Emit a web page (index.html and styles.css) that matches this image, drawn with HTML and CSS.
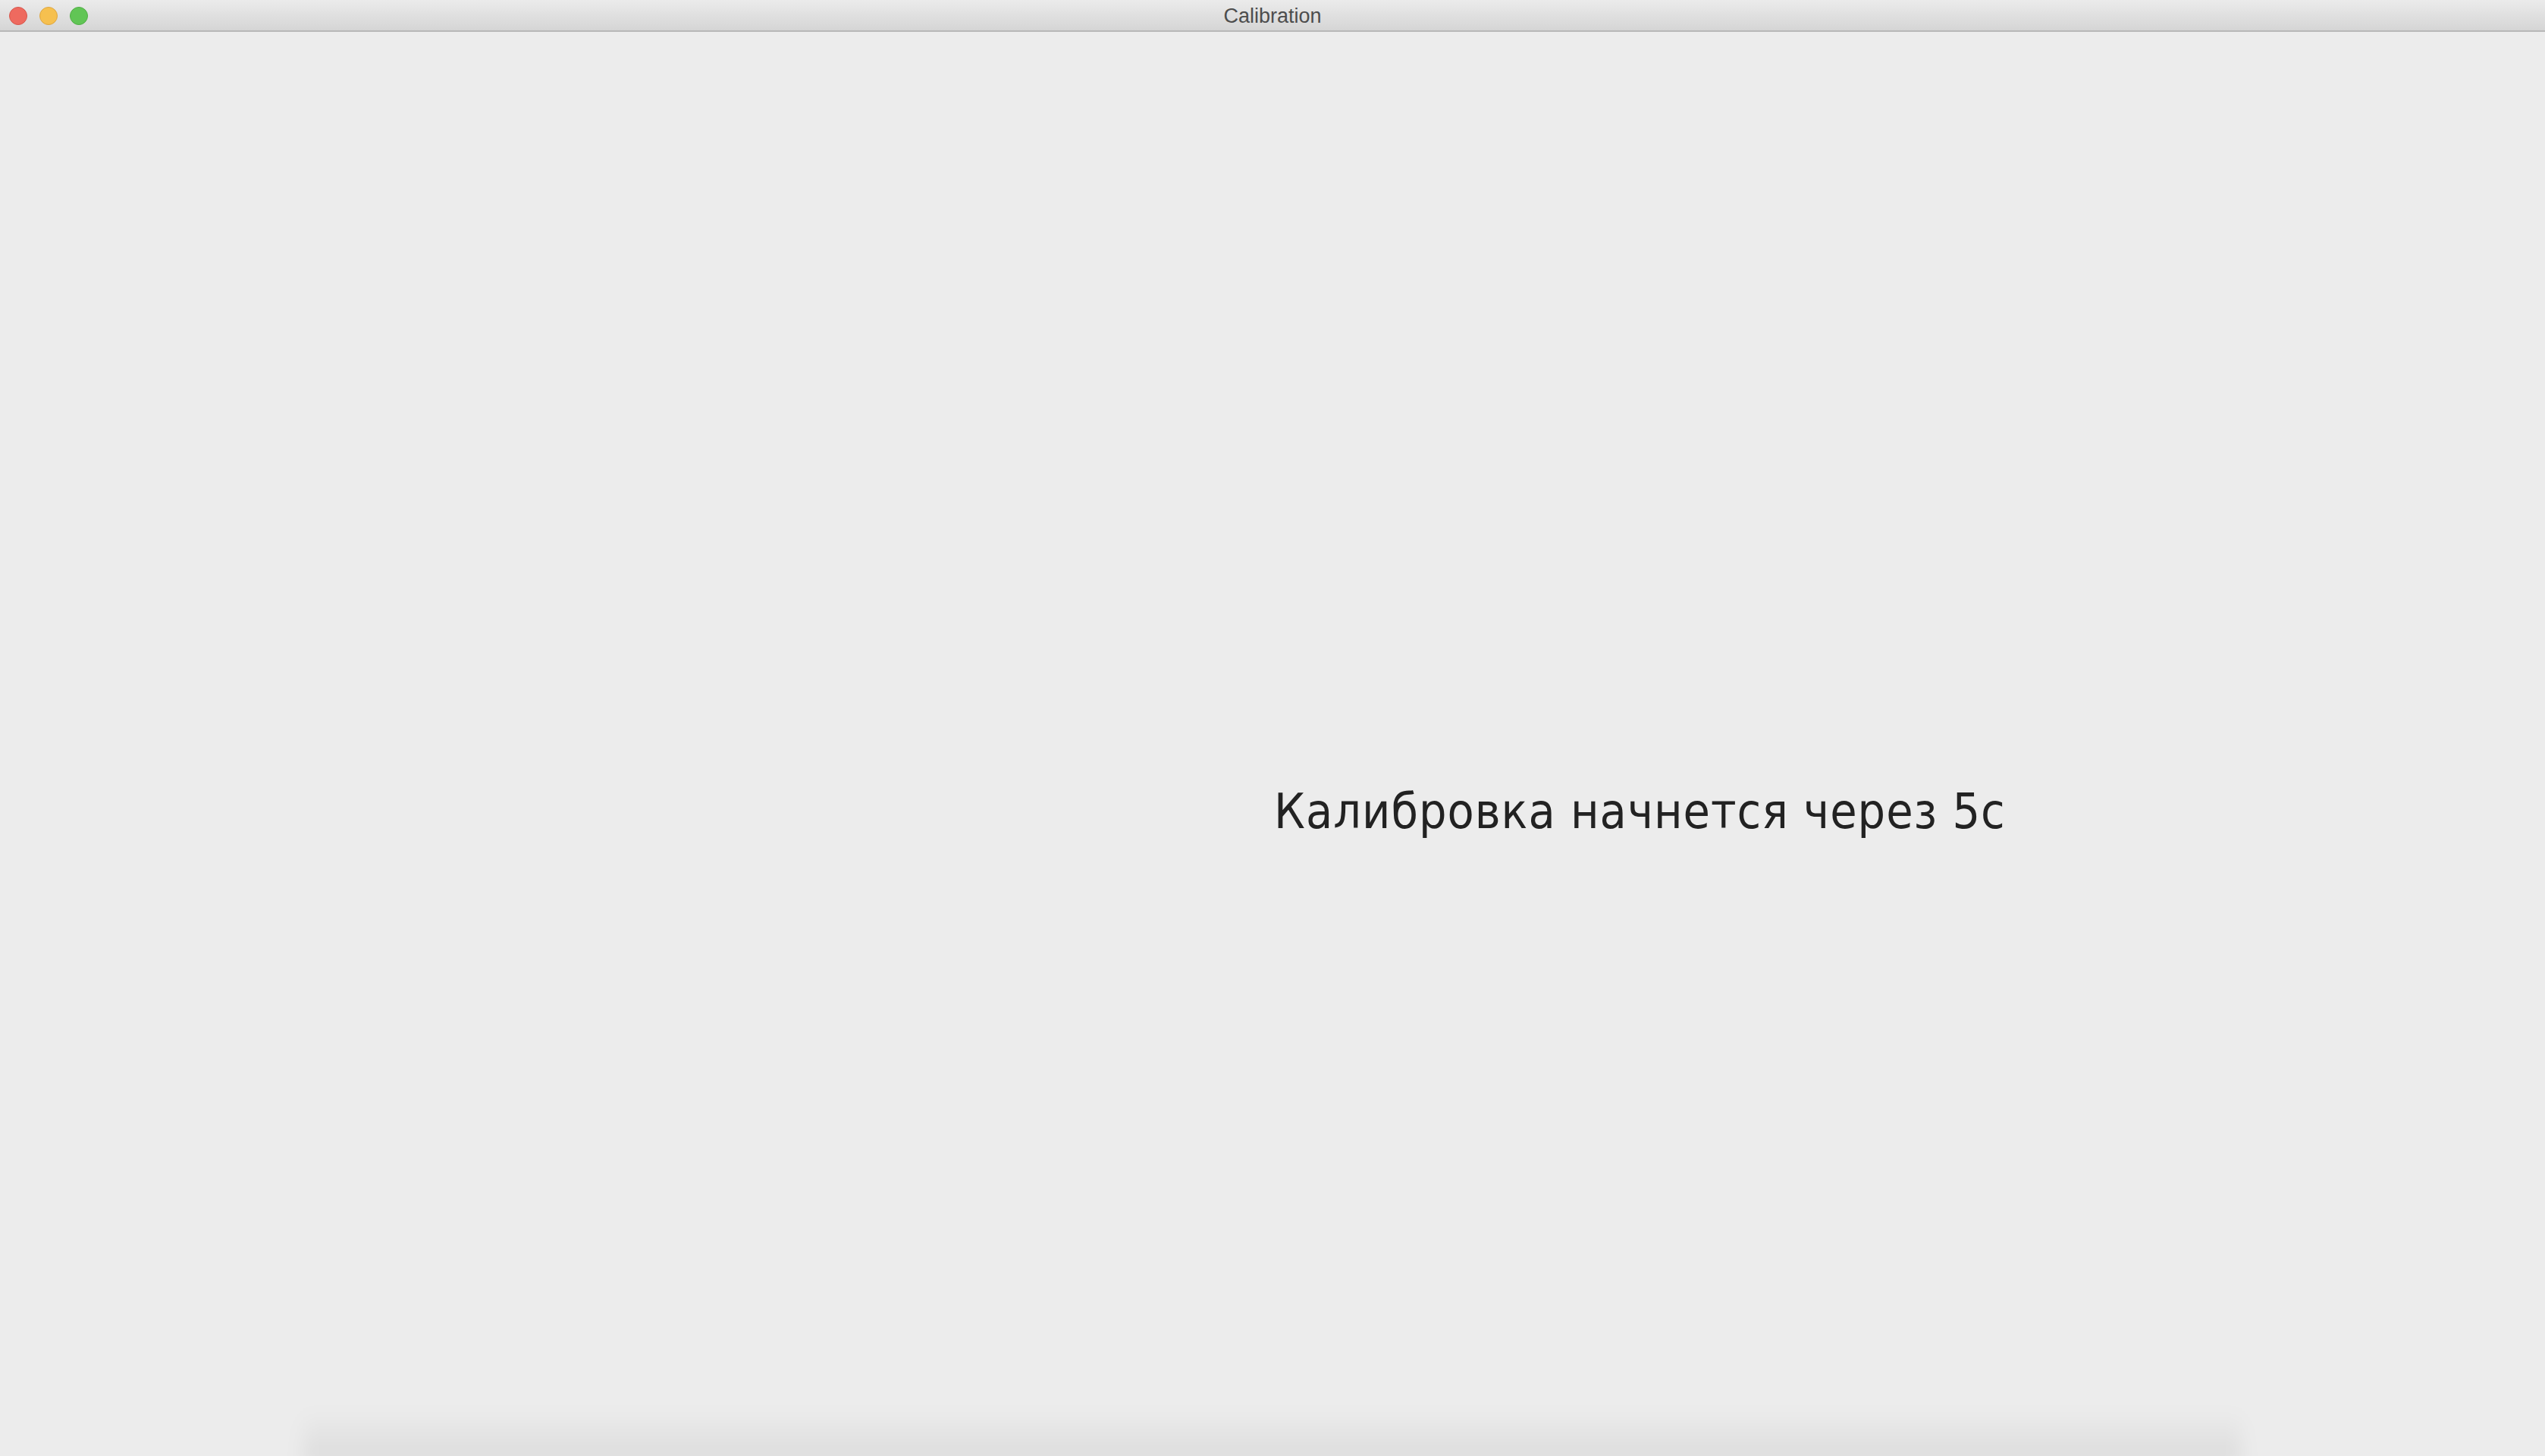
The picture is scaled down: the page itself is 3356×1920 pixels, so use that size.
FILE: index.html
```html
<!DOCTYPE html>
<html lang="ru">
<head>
<meta charset="utf-8">
<title>Calibration</title>
<link rel="stylesheet" href="styles.css">
</head>
<body>
<div class="window">
  <header class="titlebar">
    <div class="lights">
      <span class="light close"></span>
      <span class="light min"></span>
      <span class="light max"></span>
    </div>
    <div class="title">Calibration</div>
  </header>
  <main class="content">
    <div class="message">Калибровка начнется через 5с</div>
    <div class="spacer"></div>
    <div class="shadow"></div>
  </main>
</div>
</body>
</html>
```
FILE: styles.css
```css
html, body {
  margin: 0;
  padding: 0;
  width: 3356px;
  height: 1920px;
  overflow: hidden;
  background: #ececec;
}
.window {
  width: 3356px;
  height: 1920px;
  display: flex;
  flex-direction: column;
  background: #ececec;
}
.titlebar {
  height: 40px;
  flex: none;
  display: grid;
  grid-template-columns: 1fr auto 1fr;
  align-items: center;
  background: linear-gradient(#ebebeb, #d5d5d5);
  border-bottom: 2px solid #b8b8b8;
}
.lights {
  grid-column: 1;
  display: flex;
  gap: 16px;
  padding-left: 12px;
  align-items: center;
}
.light {
  width: 22px;
  height: 22px;
  border-radius: 50%;
  border: 1px solid;
}
.close { background: #ee6a5f; border-color: #d8554b; }
.min { background: #f6c04f; border-color: #dea63f; }
.max { background: #61c555; border-color: #4fae44; }
.title {
  grid-column: 2;
  font-family: "Liberation Sans", Arial, sans-serif;
  font-size: 27px;
  color: #4d4d4d;
  line-height: 40px;
  padding-top: 1px;
}
.content {
  flex: 1;
  display: flex;
  flex-direction: column;
  min-height: 0;
}
.message {
  padding-top: 983px;
  padding-left: 1680px;
  font-family: "DejaVu Sans Condensed", "DejaVu Sans", sans-serif;
  font-stretch: condensed;
  font-size: 64px;
  letter-spacing: 1px;
  line-height: 90px;
  color: #222222;
  white-space: nowrap;
}
.spacer { flex: 1; }
.shadow {
  flex: none;
  height: 70px;
  margin: 0 400px -10px 400px;
  background: linear-gradient(rgba(0,0,0,0), rgba(0,0,0,0.07));
  filter: blur(12px);
}
```
